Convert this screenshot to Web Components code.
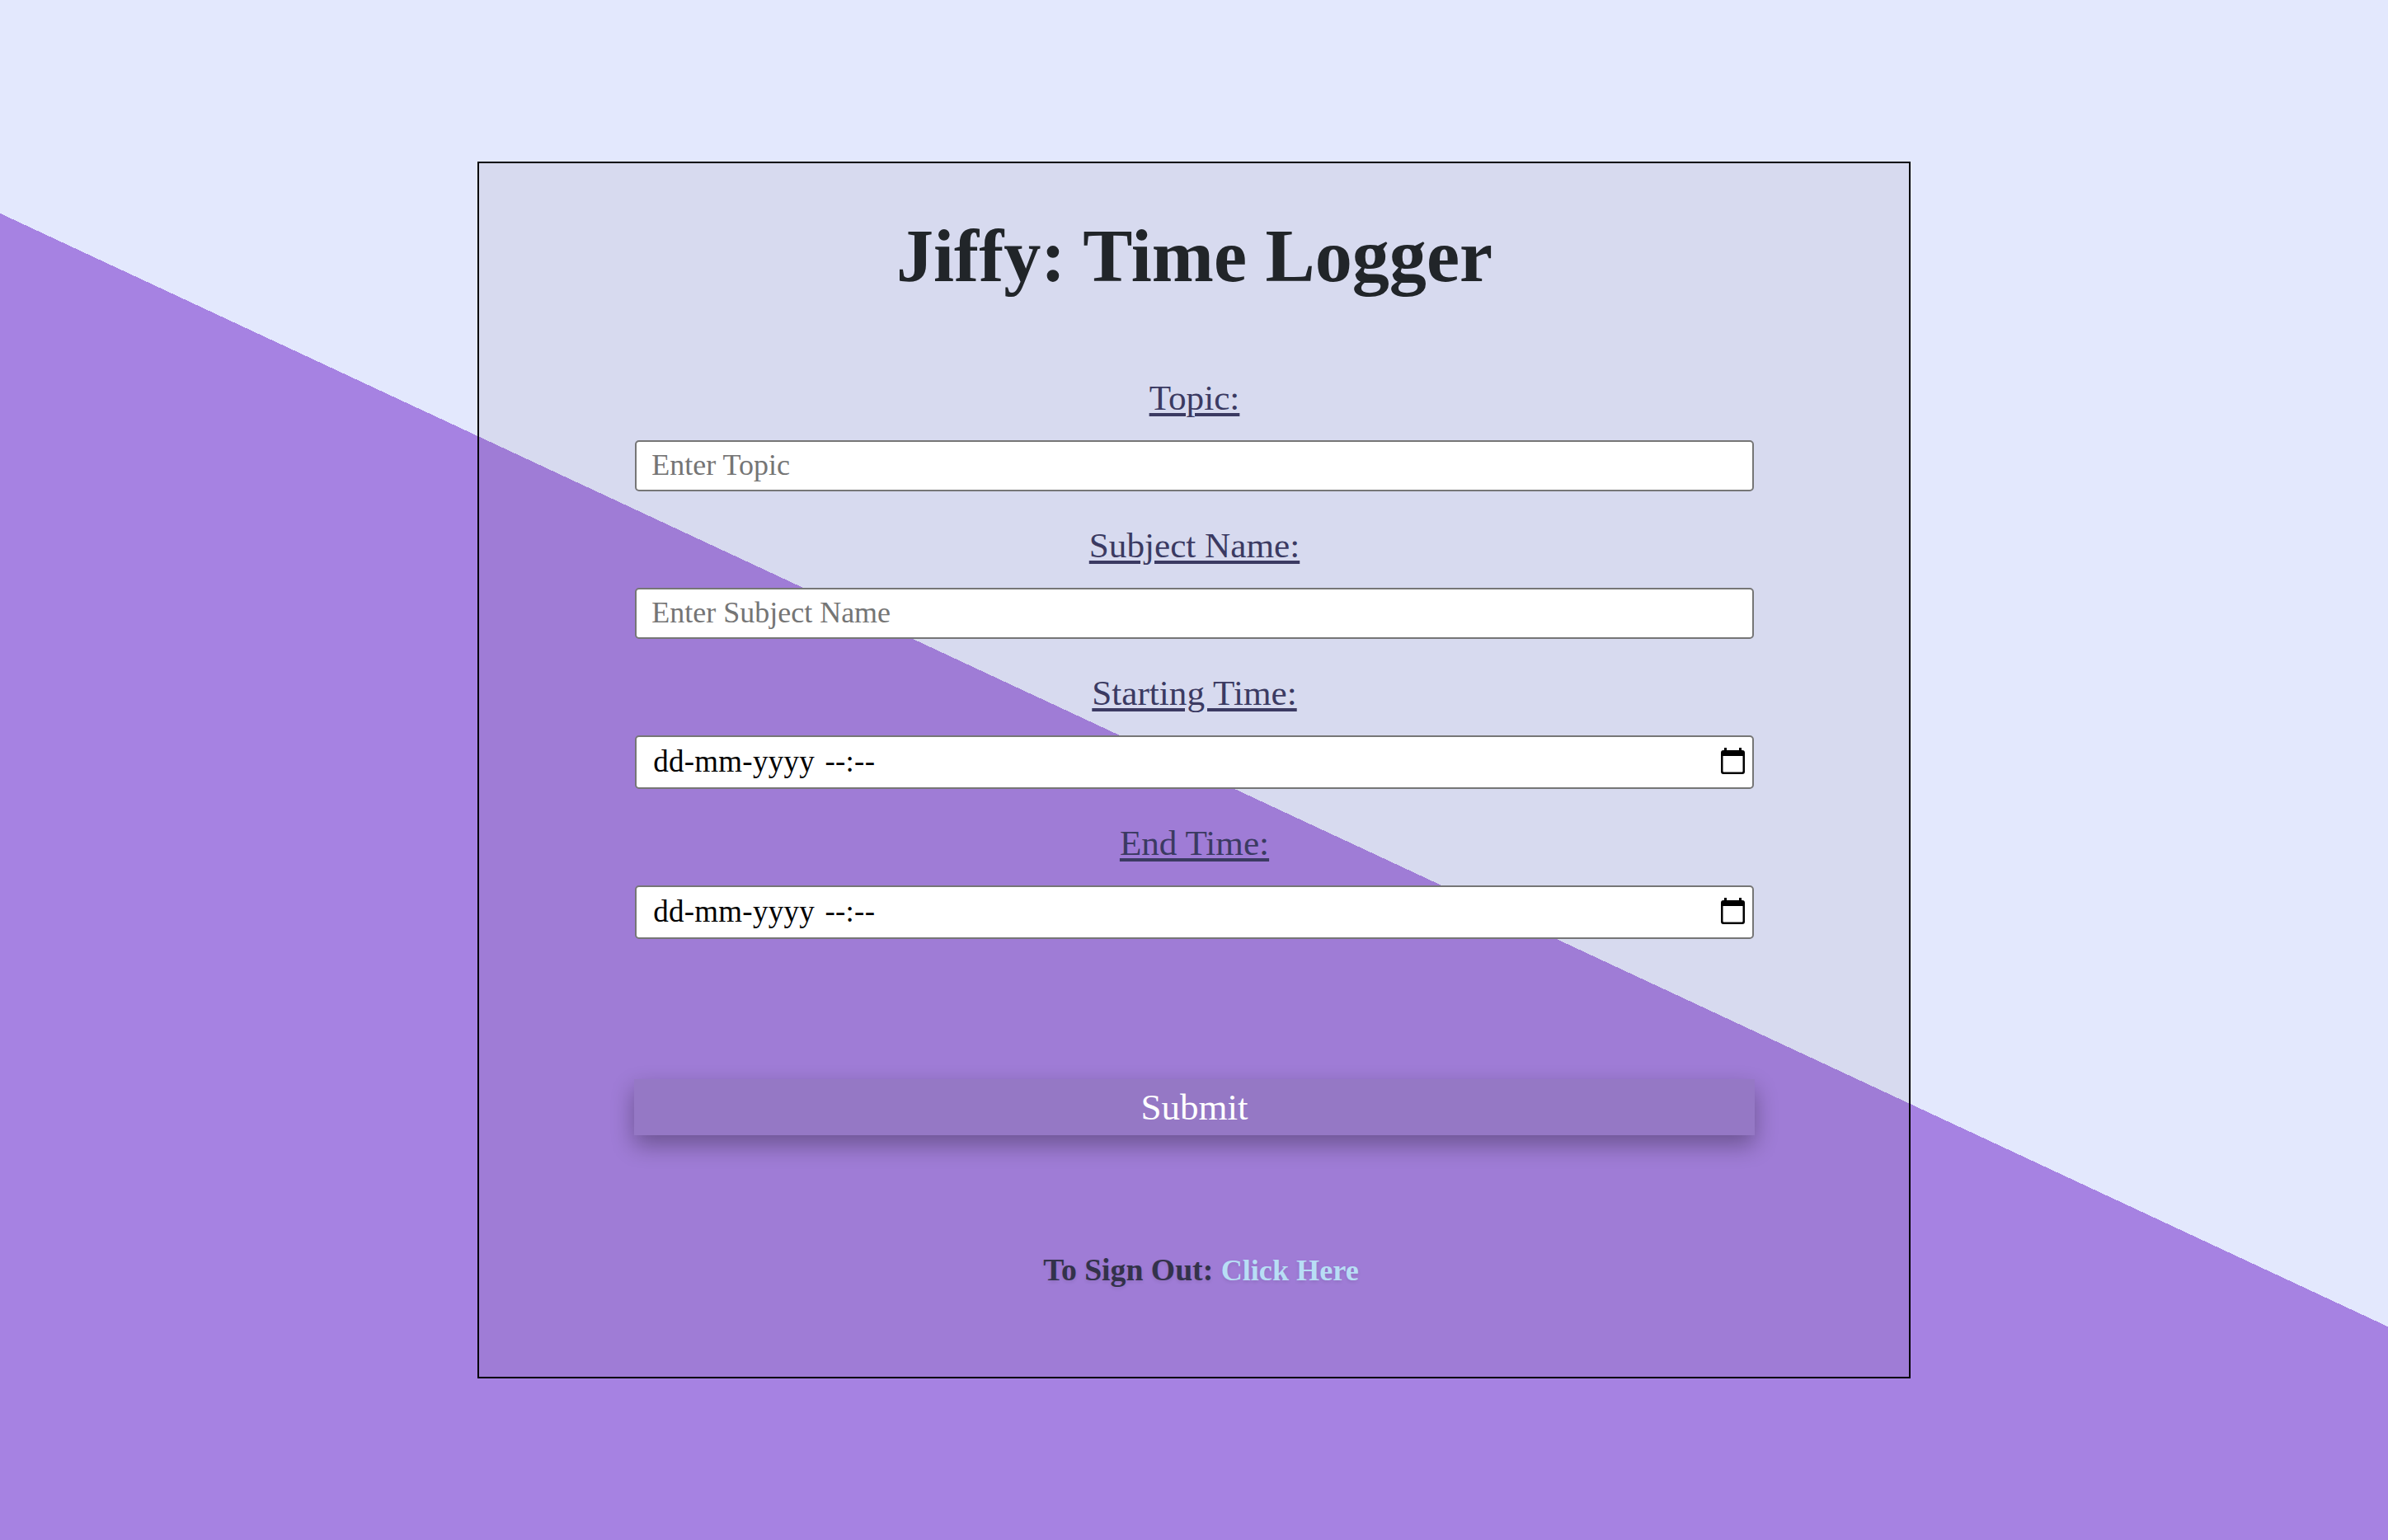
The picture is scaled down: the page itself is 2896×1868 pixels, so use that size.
<!DOCTYPE html>
<html lang="en">
<head>
<meta charset="utf-8">
<title>Jiffy: Time Logger</title>
<style>
  html, body { margin: 0; }
  body { font-family: "Liberation Serif", "Times New Roman", serif; }
</style>
</head>
<body>
<jiffy-page>
  <jiffy-card heading="Jiffy: Time Logger">
    <jiffy-field label="Topic:" placeholder="Enter Topic"></jiffy-field>
    <jiffy-field label="Subject Name:" placeholder="Enter Subject Name"></jiffy-field>
    <jiffy-field label="Starting Time:" type="datetime"></jiffy-field>
    <jiffy-field label="End Time:" type="datetime"></jiffy-field>
    <jiffy-submit>Submit</jiffy-submit>
    <jiffy-signout></jiffy-signout>
  </jiffy-card>
</jiffy-page>

<script>
class JiffyPage extends HTMLElement {
  constructor() {
    super();
    this.attachShadow({mode: 'open'});
    this.shadowRoot.innerHTML = `
      <style>
        :host {
          display: grid;
          place-items: center;
          min-height: 100vh;
          background: linear-gradient(205deg, #e3e8fd 50%, #a682e2 50%);
        }
      </style>
      <slot></slot>
    `;
  }
}

class JiffyCard extends HTMLElement {
  constructor() {
    super();
    this.attachShadow({mode: 'open'});
    this.shadowRoot.innerHTML = `
      <style>
        :host {
          display: block;
          box-sizing: border-box;
          width: 60%;
          height: 1476px;
          border: 2px solid #000;
          background: rgba(80, 60, 76, 0.08);
          padding: 60px 188px 0 189px;
        }
        h1 {
          margin: 0 0 94px;
          font-size: 90.2px;
          line-height: 106px;
          font-weight: bold;
          text-align: center;
          color: #212529;
        }
      </style>
      <h1></h1>
      <slot></slot>
    `;
  }

  connectedCallback() {
    this.shadowRoot.querySelector('h1').textContent = this.getAttribute('heading');
  }
}

class JiffyField extends HTMLElement {
  constructor() {
    super();
    this.attachShadow({mode: 'open'});
    this.shadowRoot.innerHTML = `
      <style>
        :host { display: block; margin-bottom: 41px; }
        label {
          display: block;
          text-align: center;
          font-size: 43.2px;
          line-height: 50px;
          margin-bottom: 26px;
          color: #3b3a62;
          text-decoration: underline;
          text-decoration-thickness: 4px;
          text-underline-offset: 4px;
        }
        .box {
          box-sizing: border-box;
          display: flex;
          align-items: center;
          justify-content: space-between;
          height: 62px;
          padding: 0 9px 3px 18px;
          background: #fff;
          border: 2px solid #767676;
          border-radius: 5px;
          font-size: 36px;
          color: #757575;
        }
        :host([type="datetime"]) .box {
          height: 65px;
          padding-left: 20px;
          font-size: 37px;
          letter-spacing: 0.25px;
          word-spacing: 3px;
          color: #000;
        }
        svg { display: block; width: 29px; height: 32px; }
      </style>
      <label></label>
      <div class="box"><span class="text"></span></div>
    `;
  }

  connectedCallback() {
    this.shadowRoot.querySelector('label').textContent = this.getAttribute('label');
    const text = this.shadowRoot.querySelector('.text');
    if (this.getAttribute('type') === 'datetime') {
      text.textContent = 'dd-mm-yyyy --:--';
      this.shadowRoot.querySelector('.box').insertAdjacentHTML('beforeend', `
        <svg viewBox="0 0 29 32">
          <path fill="#000" fill-rule="evenodd" d="M4 0h3v3h15V0h3v3h1a3 3 0 0 1 3 3v23a3 3 0 0 1-3 3H3a3 3 0 0 1-3-3V6a3 3 0 0 1 3-3h1zM2.5 10v18.5a1 1 0 0 0 1 1h22a1 1 0 0 0 1-1V10z"/>
        </svg>`);
    } else {
      text.textContent = this.getAttribute('placeholder');
    }
  }
}

class JiffySubmit extends HTMLElement {
  constructor() {
    super();
    this.attachShadow({mode: 'open'});
    this.shadowRoot.innerHTML = `
      <style>
        :host { display: block; margin: 170px -1px 0; }
        button {
          display: block;
          width: 100%;
          height: 68px;
          padding: 0;
          border: 0;
          background: #9578c5;
          box-shadow: 0 12px 28px rgba(0, 0, 0, 0.32);
          color: #fff;
          font: 45px "Liberation Serif", "Times New Roman", serif;
        }
      </style>
      <button type="button"><slot></slot></button>
    `;
  }
}

class JiffySignout extends HTMLElement {
  constructor() {
    super();
    this.attachShadow({mode: 'open'});
    this.shadowRoot.innerHTML = `
      <style>
        :host {
          display: block;
          margin-top: 142px;
          padding-left: 16px;
          text-align: center;
          font-size: 37.7px;
          line-height: 42px;
          font-weight: bold;
          color: #33324a;
          text-shadow: 0 2px 4px rgba(0, 0, 0, 0.1);
        }
        a { color: #b8def5; font-size: 36.2px; text-decoration: none; }
      </style>
      To Sign Out: <a href="#">Click Here</a>
    `;
  }
}

customElements.define('jiffy-page', JiffyPage);
customElements.define('jiffy-card', JiffyCard);
customElements.define('jiffy-field', JiffyField);
customElements.define('jiffy-submit', JiffySubmit);
customElements.define('jiffy-signout', JiffySignout);
</script>
</body>
</html>
